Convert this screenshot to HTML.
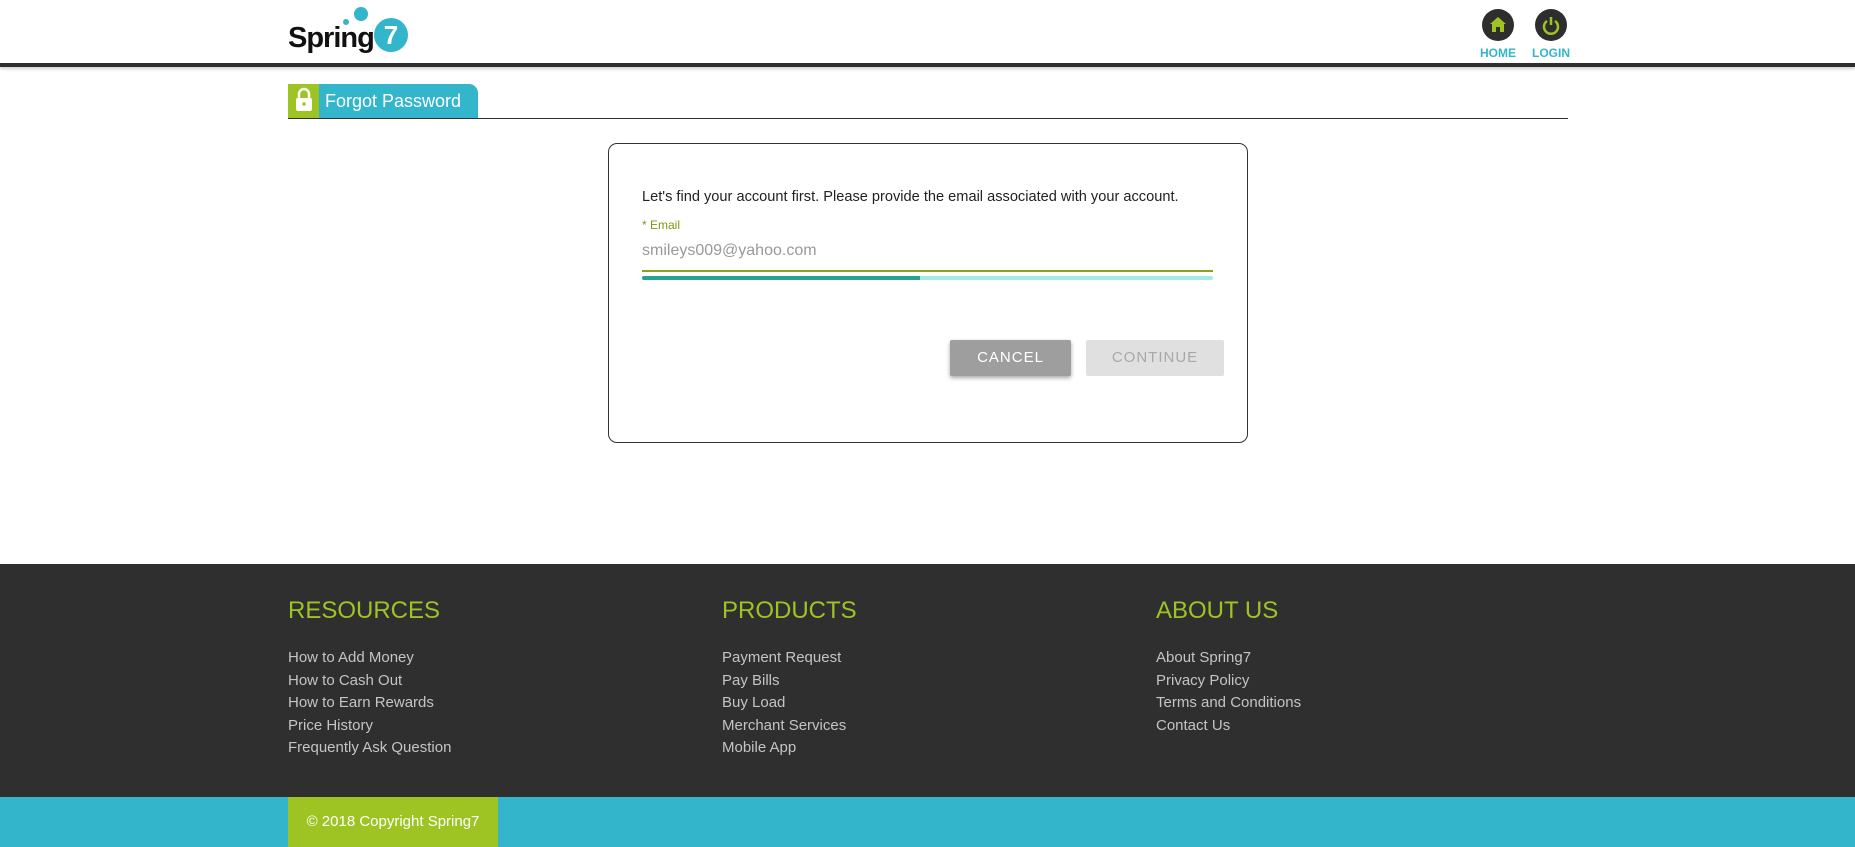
<!DOCTYPE html>
<html><head><meta charset="utf-8"><style>
*{margin:0;padding:0;box-sizing:border-box}
body{width:1855px;height:847px;background:#fff;font-family:"Liberation Sans",sans-serif;position:relative;overflow:hidden}
.abs{position:absolute}
.hdrline{left:0;top:63px;width:1855px;height:4px;background:#2e2e2e;box-shadow:0 2px 3px rgba(0,0,0,.2)}
.nav{font-size:12px;font-weight:bold;color:#33b5cb;text-align:center;width:50px}
.circ{width:32px;height:32px;border-radius:50%;background:#2e2e2e}
.foot{left:0;top:564px;width:1855px;height:233px;background:#2f2f2f}
.cy{left:0;top:797px;width:1855px;height:50px;background:#33b5cb}
.col{top:596px;color:#c4c4c4;font-size:15px;line-height:22.6px}
.col h3{font-weight:normal;color:#9dc423;font-size:24px;line-height:30px;margin-bottom:21px}
</style></head><body>
<div class="abs" style="left:288px;top:22px;font-size:29px;font-weight:bold;color:#111;letter-spacing:-1px">Spring</div>
<div class="abs" style="left:374px;top:18px;width:34px;height:34px;border-radius:50%;background:#33b5cb;color:#fff;font-weight:bold;font-size:26px;text-align:center;line-height:34px">7</div>
<div class="abs" style="left:343px;top:19px;width:6px;height:6px;border-radius:50%;background:#33b5cb"></div>
<div class="abs" style="left:354px;top:7px;width:14px;height:14px;border-radius:50%;background:#33b5cb"></div>
<div class="abs hdrline"></div>
<div class="abs circ" style="left:1482px;top:9px"><svg width="32" height="32"><path d="M16 8 L24 15 H22 V23 H18 V18 H14 V23 H10 V15 H8 Z" fill="#9dc423"/></svg></div>
<div class="abs circ" style="left:1535px;top:9px"><svg width="32" height="32"><path d="M12 12 A7 7 0 1 0 20 12" stroke="#9dc423" stroke-width="2.5" fill="none"/><path d="M16 8 V16" stroke="#9dc423" stroke-width="2.5"/></svg></div>
<div class="abs nav" style="left:1473px;top:46px">HOME</div>
<div class="abs nav" style="left:1526px;top:46px">LOGIN</div>
<div class="abs" style="left:288px;top:84px;width:32px;height:34px;background:#9dc423"></div>
<div class="abs" style="left:319px;top:84px;width:159px;height:34px;background:#33b5cb;border-top-right-radius:9px;color:#fff;font-size:18px;line-height:34px;padding-left:6px">Forgot Password</div>
<svg class="abs" style="left:293px;top:86px" width="22" height="28"><path d="M6 12 V8 A5 5 0 0 1 16 8 V12" stroke="#fff" stroke-width="2.5" fill="none"/><rect x="3" y="12" width="16" height="13" rx="2" fill="#fff"/><circle cx="11" cy="18" r="1.7" fill="#9dc423"/></svg>
<div class="abs" style="left:288px;top:118px;width:1280px;height:1px;background:#333"></div>
<div class="abs" style="left:608px;top:143px;width:640px;height:300px;border:1px solid #333;border-radius:9px"></div>
<div class="abs" style="left:642px;top:189px;font-size:14.6px;color:#222">Let's find your account first. Please provide the email associated with your account.</div>
<div class="abs" style="left:642px;top:218px;font-size:12px;color:#7a9a10">* Email</div>
<div class="abs" style="left:642px;top:242px;font-size:16px;color:#999">smileys009@yahoo.com</div>
<div class="abs" style="left:642px;top:270px;width:571px;height:2px;background:#88a51a"></div>
<div class="abs" style="left:642px;top:276px;width:571px;height:4px;background:#a6ebe3;border-radius:2px"></div>
<div class="abs" style="left:642px;top:276px;width:278px;height:4px;background:#27a193;border-radius:2px 0 0 2px"></div>
<div class="abs" style="left:950px;top:340px;width:121px;height:36px;background:#9e9e9e;color:#fff;font-size:15px;letter-spacing:1px;text-align:center;line-height:36px;border-radius:2px;box-shadow:0 2px 4px rgba(0,0,0,.35)">CANCEL</div>
<div class="abs" style="left:1086px;top:340px;width:138px;height:36px;background:#e0e0e0;color:#a8a8a8;font-size:15px;letter-spacing:1px;text-align:center;line-height:36px;border-radius:2px">CONTINUE</div>
<div class="abs foot"></div>
<div class="abs col" style="left:288px"><h3>RESOURCES</h3>How to Add Money<br>How to Cash Out<br>How to Earn Rewards<br>Price History<br>Frequently Ask Question</div>
<div class="abs col" style="left:722px"><h3>PRODUCTS</h3>Payment Request<br>Pay Bills<br>Buy Load<br>Merchant Services<br>Mobile App</div>
<div class="abs col" style="left:1156px"><h3>ABOUT US</h3>About Spring7<br>Privacy Policy<br>Terms and Conditions<br>Contact Us</div>
<div class="abs cy"></div>
<div class="abs" style="left:288px;top:797px;width:210px;height:50px;background:#9dc423;color:#fff;font-size:15px;line-height:50px;text-align:center">© 2018 Copyright Spring7</div>
</body></html>
